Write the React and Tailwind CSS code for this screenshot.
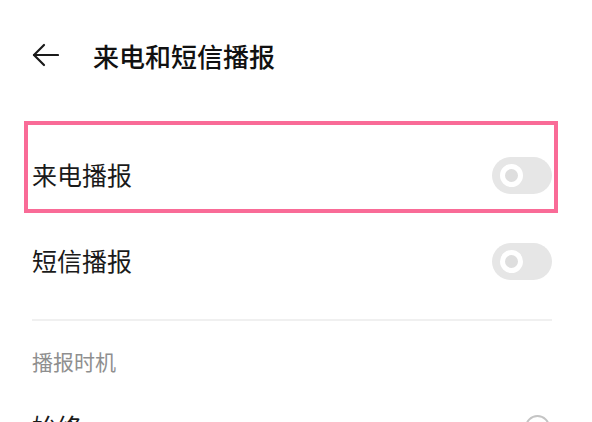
const FONT = { fontFamily: '"Noto Sans CJK SC", "Noto Sans", sans-serif' }

const Toggle = () => (
  <div className="w-[60px] h-[37px] rounded-full bg-[#e6e6e6] flex items-center pl-[8px] shrink-0">
    <div className="w-[23px] h-[23px] rounded-full border-[5px] border-white bg-[#dedede]" />
  </div>
)

const SwitchRow = ({ label }) => (
  <div className="h-[86px] flex items-center justify-between">
    <span className="text-[25px] text-[#1a1a1a]">{label}</span>
    <Toggle />
  </div>
)

export default function App() {
  return (
    <div className="relative w-[592px] h-[422px] overflow-hidden bg-white" style={FONT}>
      {/* header */}
      <div className="mt-[27px] h-[56px] flex items-center pl-[32px]">
        <svg width="27" height="24" viewBox="0 0 27 24" fill="none" stroke="#1a1a1a" strokeWidth="2.2" strokeLinecap="round" strokeLinejoin="round">
          <path d="M26 12H2" />
          <path d="M12 2L2 12l10 10" />
        </svg>
        <span className="ml-[34px] text-[26px] font-medium text-[#111]">来电和短信播报</span>
      </div>

      <div className="mt-[49px] pl-[32px] pr-[40px]">
        <SwitchRow label="来电播报" />
        <SwitchRow label="短信播报" />
        <div className="mt-[15px] h-[2px] bg-[#f0f0f0]" />
        <div className="mt-[25px] h-[30px] leading-[30px] text-[21px] text-[#8f8f8f]">播报时机</div>
        <div className="mt-[8px] h-[86px] flex items-center justify-between">
          <span className="text-[25px] text-[#1a1a1a]">始终</span>
          <div className="w-[25px] h-[25px] rounded-full border-2 border-[#c4c4c4] mr-[2px]" />
        </div>
      </div>

      {/* highlight annotation */}
      <div className="absolute left-[24px] top-[121px] w-[534px] h-[92px] border-[4px] border-[#f96b97] pointer-events-none" />
    </div>
  )
}
